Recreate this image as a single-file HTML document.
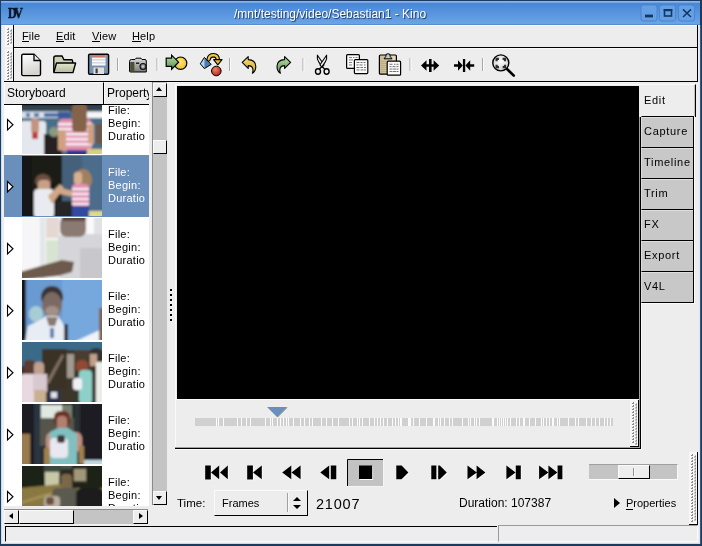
<!DOCTYPE html>
<html><head><meta charset="utf-8">
<style>
*{margin:0;padding:0;box-sizing:border-box}
html,body{width:702px;height:546px;overflow:hidden;background:#ededed;font-family:"Liberation Sans",sans-serif;font-size:12px;color:#000}
.a{position:absolute}
.t{position:absolute;white-space:nowrap;line-height:12px;font-size:12px;will-change:transform}
.hd{position:absolute;background-image:radial-gradient(circle at 1px 1px,#9a9a9a 0.9px,transparent 1.1px);background-size:3px 3px;background-color:#f6f6f6}
.th{position:absolute;width:80px;height:60px;overflow:hidden}
.tx{position:absolute;white-space:nowrap;line-height:12px;font-size:11px;letter-spacing:0.25px;left:108px;will-change:transform}
.ex{position:absolute;left:7px;width:0;height:0}
.tab{position:absolute;left:641px;width:53px;height:32px;background:#c8c8c8;border-top:1px solid #000;border-left:1px solid #dcdcdc;border-right:1px solid #000;border-bottom:1px solid #000;box-shadow:inset 0 1px 0 #dedede}
.tab span{position:absolute;left:2px;will-change:transform;white-space:nowrap;font-size:11px;line-height:12px;letter-spacing:0.7px}
</style></head><body>
<!-- window frame -->
<div class="a" style="left:0;top:0;width:702px;height:25px;background:linear-gradient(#4686d6 10%,#6aa4e6 95%)"></div><div class="a" style="left:0;top:24px;width:702px;height:1px;background:#5a8cc8"></div>
<div class="a" style="left:0;top:0;width:702px;height:1px;background:#1d3b63"></div>
<div class="a" style="left:1px;top:1px;width:699px;height:2px;background:linear-gradient(#8cbcf0,#6aa0e4)"></div>
<div class="a" style="left:0;top:25px;width:702px;height:1px;background:#f8fbff"></div>
<div class="a" style="left:0;top:0;width:1px;height:546px;background:#1e3a5c"></div>
<div class="a" style="left:1px;top:25px;width:1px;height:519px;background:#c8ddf5"></div>
<div class="a" style="left:700px;top:0;width:2px;height:546px;background:#1e3a5c"></div><div class="a" style="left:700px;top:25px;width:1px;height:519px;background:#3a5a84"></div>
<div class="a" style="left:699px;top:25px;width:1px;height:519px;background:#d6e6f7"></div>
<div class="a" style="left:0;top:544px;width:702px;height:2px;background:#1e3a5c"></div>
<div class="a" style="left:1px;top:543px;width:699px;height:1px;background:#c8ddf5"></div>

<!-- title -->
<div class="t" style="left:8px;top:6px;font-family:'Liberation Serif';font-weight:bold;font-size:15px;line-height:15px;color:#0a1020;letter-spacing:-3px;transform:scaleX(0.8);transform-origin:0 0;-webkit-text-stroke:0.5px #0a1020">DV</div>
<div class="t" style="left:234px;top:8px;color:#fff;text-shadow:1px 1px 1px #1a3358">/mnt/testing/video/Sebastian1 - Kino</div>

<svg class="a" style="left:636px;top:0" width="66" height="25">
<rect x="5" y="5" width="16" height="16" rx="2.5" fill="#63a0e6" stroke="#4a84cc" stroke-width="1"/>
<rect x="23.5" y="5" width="16" height="16" rx="2.5" fill="#63a0e6" stroke="#4a84cc" stroke-width="1"/>
<rect x="42.5" y="5" width="16" height="16" rx="2.5" fill="#63a0e6" stroke="#4a84cc" stroke-width="1"/>
<rect x="9" y="14.6" width="8" height="2.8" fill="#16365e"/>
<rect x="28.5" y="9.8" width="7" height="6.2" fill="none" stroke="#16365e" stroke-width="1.6"/>
<rect x="27.7" y="9" width="8.6" height="2.2" fill="#16365e"/>
<path d="M47,9.4 L55,17 M55,9.4 L47,17" stroke="#16365e" stroke-width="1.5"/>
</svg>
<!-- menubar -->
<svg class="a" style="left:5px;top:26px" width="8" height="21"><rect width="8" height="21" fill="#f7f7f7"/><path d="M2,4 h2 v-2 h-1 v1 h-1z" fill="#8c8c8c"/><path d="M5,5.5 h2 v-2 h-1 v1 h-1z" fill="#8c8c8c"/><path d="M2,7 h2 v-2 h-1 v1 h-1z" fill="#8c8c8c"/><path d="M5,8.5 h2 v-2 h-1 v1 h-1z" fill="#8c8c8c"/><path d="M2,10 h2 v-2 h-1 v1 h-1z" fill="#8c8c8c"/><path d="M5,11.5 h2 v-2 h-1 v1 h-1z" fill="#8c8c8c"/><path d="M2,13 h2 v-2 h-1 v1 h-1z" fill="#8c8c8c"/><path d="M5,14.5 h2 v-2 h-1 v1 h-1z" fill="#8c8c8c"/><path d="M2,16 h2 v-2 h-1 v1 h-1z" fill="#8c8c8c"/><path d="M5,17.5 h2 v-2 h-1 v1 h-1z" fill="#8c8c8c"/><path d="M2,19 h2 v-2 h-1 v1 h-1z" fill="#8c8c8c"/></svg>
<div class="a" style="left:13px;top:25px;width:1px;height:23px;background:#000"></div>
<div class="a" style="left:13px;top:47px;width:685px;height:1px;background:#000"></div>
<div class="a" style="left:697px;top:25px;width:1px;height:23px;background:#000"></div>
<div class="t" style="left:22px;top:30px;font-size:11px;letter-spacing:0.15px">File</div>
<div class="t" style="left:56px;top:30px;font-size:11px;letter-spacing:0.15px">Edit</div>
<div class="t" style="left:92px;top:30px;font-size:11px;letter-spacing:0.15px">View</div>
<div class="t" style="left:132px;top:30px;font-size:11px;letter-spacing:0.15px">Help</div>
<div class="a" style="left:22px;top:41px;width:7px;height:1px;background:#000"></div>
<div class="a" style="left:56px;top:41px;width:8px;height:1px;background:#000"></div>
<div class="a" style="left:92px;top:41px;width:8px;height:1px;background:#000"></div>
<div class="a" style="left:132px;top:41px;width:9px;height:1px;background:#000"></div>

<!-- toolbar -->
<svg class="a" style="left:5px;top:49px" width="8" height="32"><rect width="8" height="32" fill="#f7f7f7"/><path d="M2,4 h2 v-2 h-1 v1 h-1z" fill="#8c8c8c"/><path d="M5,5.5 h2 v-2 h-1 v1 h-1z" fill="#8c8c8c"/><path d="M2,7 h2 v-2 h-1 v1 h-1z" fill="#8c8c8c"/><path d="M5,8.5 h2 v-2 h-1 v1 h-1z" fill="#8c8c8c"/><path d="M2,10 h2 v-2 h-1 v1 h-1z" fill="#8c8c8c"/><path d="M5,11.5 h2 v-2 h-1 v1 h-1z" fill="#8c8c8c"/><path d="M2,13 h2 v-2 h-1 v1 h-1z" fill="#8c8c8c"/><path d="M5,14.5 h2 v-2 h-1 v1 h-1z" fill="#8c8c8c"/><path d="M2,16 h2 v-2 h-1 v1 h-1z" fill="#8c8c8c"/><path d="M5,17.5 h2 v-2 h-1 v1 h-1z" fill="#8c8c8c"/><path d="M2,19 h2 v-2 h-1 v1 h-1z" fill="#8c8c8c"/><path d="M5,20.5 h2 v-2 h-1 v1 h-1z" fill="#8c8c8c"/><path d="M2,22 h2 v-2 h-1 v1 h-1z" fill="#8c8c8c"/><path d="M5,23.5 h2 v-2 h-1 v1 h-1z" fill="#8c8c8c"/><path d="M2,25 h2 v-2 h-1 v1 h-1z" fill="#8c8c8c"/><path d="M5,26.5 h2 v-2 h-1 v1 h-1z" fill="#8c8c8c"/><path d="M2,28 h2 v-2 h-1 v1 h-1z" fill="#8c8c8c"/><path d="M5,29.5 h2 v-2 h-1 v1 h-1z" fill="#8c8c8c"/><path d="M2,31 h2 v-2 h-1 v1 h-1z" fill="#8c8c8c"/></svg>
<div class="a" style="left:13px;top:48px;width:1px;height:34px;background:#000"></div>
<div class="a" style="left:4px;top:81px;width:694px;height:1px;background:#000"></div>
<div class="a" style="left:697px;top:48px;width:1px;height:34px;background:#000"></div>
<div class="a" style="left:14px;top:48px;width:683px;height:1px;background:#fafafa"></div>
<svg class="a" style="left:0;top:48px" width="520" height="34" viewBox="0 48 520 34">
<defs>
<linearGradient id="gdoc" x1="0" y1="0" x2="0.3" y2="1"><stop offset="0" stop-color="#fff"/><stop offset="1" stop-color="#d6d4d0"/></linearGradient>
<linearGradient id="gfold" x1="0" y1="0" x2="0" y2="1"><stop offset="0" stop-color="#e4e8d0"/><stop offset="1" stop-color="#b4b89c"/></linearGradient>
<linearGradient id="ggreen" x1="0" y1="0" x2="0" y2="1"><stop offset="0" stop-color="#b8e0a8"/><stop offset="1" stop-color="#5a9050"/></linearGradient>
<linearGradient id="gyel" x1="0" y1="0" x2="0" y2="1"><stop offset="0" stop-color="#f8e080"/><stop offset="1" stop-color="#d0a020"/></linearGradient>
<radialGradient id="gred" cx="0.4" cy="0.35" r="0.7"><stop offset="0" stop-color="#f08070"/><stop offset="1" stop-color="#b02010"/></radialGradient>
<radialGradient id="gcirc" cx="0.45" cy="0.4" r="0.7"><stop offset="0" stop-color="#ffe870"/><stop offset="1" stop-color="#e8b830"/></radialGradient>
<linearGradient id="gtan" x1="0" y1="0" x2="1" y2="0"><stop offset="0" stop-color="#c8b890"/><stop offset="1" stop-color="#e8dcc0"/></linearGradient>
<radialGradient id="glens" cx="0.5" cy="0.4" r="0.7"><stop offset="0" stop-color="#fff"/><stop offset="1" stop-color="#c8c8c8"/></radialGradient>
</defs>
<!-- new -->
<path d="M21.7,55.8 Q21.7,54.3 23.2,54.3 H34 L40.5,60.8 V74.2 Q40.5,75.6 39,75.6 H23.2 Q21.7,75.6 21.7,74.2 Z" fill="url(#gdoc)" stroke="#000" stroke-width="1.4"/>
<path d="M34,54.5 V60.5 H40.3" fill="#e8e8e8" stroke="#000" stroke-width="1.3"/>
<!-- open -->
<path d="M53.8,72 V58 Q53.8,56 55.8,56 H62 L64,59.8 H71.5 Q72.6,59.8 72.6,61 V63" fill="#cdd0b4" stroke="#000" stroke-width="1.4"/>
<path d="M56.5,63 H75.6 L73,72.6 H53.8 Z" fill="url(#gfold)" stroke="#000" stroke-width="1.4" stroke-linejoin="round"/>
<!-- save -->
<rect x="88.6" y="54.3" width="20" height="20" rx="1.2" fill="#7894b4" stroke="#000" stroke-width="1.4"/>
<rect x="92" y="55" width="13.5" height="10.5" fill="#fafafa"/>
<rect x="92" y="55" width="13.5" height="2.6" fill="#d07868"/>
<rect x="92" y="59.5" width="13.5" height="0.8" fill="#b8b8c0"/>
<rect x="92" y="62.5" width="13.5" height="0.8" fill="#b8b8c0"/>
<rect x="93.5" y="67.5" width="10.5" height="6.5" fill="#e0e0dc"/>
<rect x="95.5" y="68.5" width="2.2" height="4.8" fill="#404040"/>
<!-- separators -->
<rect x="117" y="58" width="1" height="13" fill="#a8a8a8"/><rect x="118" y="58" width="1" height="13" fill="#fafafa"/>
<rect x="156.5" y="58" width="1" height="13" fill="#a8a8a8"/><rect x="157.5" y="58" width="1" height="13" fill="#fafafa"/>
<rect x="229" y="58" width="1" height="13" fill="#a8a8a8"/><rect x="230" y="58" width="1" height="13" fill="#fafafa"/>
<rect x="302.5" y="58" width="1" height="13" fill="#a8a8a8"/><rect x="303.5" y="58" width="1" height="13" fill="#fafafa"/>
<rect x="409.5" y="58" width="1" height="13" fill="#a8a8a8"/><rect x="410.5" y="58" width="1" height="13" fill="#fafafa"/>
<rect x="482" y="58" width="1" height="13" fill="#a8a8a8"/><rect x="483" y="58" width="1" height="13" fill="#fafafa"/>
<!-- camera -->
<linearGradient id="gcam" x1="0" y1="0" x2="0" y2="1"><stop offset="0" stop-color="#d8d8d8"/><stop offset="1" stop-color="#7a7a7a"/></linearGradient>
<path d="M129.5,61.5 Q129.5,59.5 131.5,59.5 H135 L136,58.2 H141 L142,59.5 H145 Q146.3,59.5 146.3,61 V72 H130.5 Q129.5,72 129.5,71 Z" fill="url(#gcam)" stroke="#000" stroke-width="1"/>
<rect x="130.2" y="62" width="4.2" height="9.6" fill="#4e4e36"/>
<rect x="136" y="62.5" width="3.2" height="1.4" fill="#101010"/>
<circle cx="143" cy="66.5" r="3" fill="#808080" stroke="#101010" stroke-width="1.1"/>
<circle cx="143" cy="66.5" r="1.2" fill="#c8c8c8"/>
<!-- capture -->
<circle cx="180.6" cy="63.2" r="6.2" fill="url(#gcirc)" stroke="#000" stroke-width="1.2"/>
<path d="M166.2,58.2 H171.6 V55.2 L178.6,62.2 L171.6,69.2 V66.4 H166.2 Z" fill="url(#ggreen)" stroke="#000" stroke-width="1.2" stroke-linejoin="miter"/>
<!-- shapes -->
<path d="M200.3,63.8 L204.4,57.4 L204.4,68.6 Z" fill="#b4d4f2"/>
<path d="M204.4,57.4 L211.2,64.4 L204.4,68.6 Z" fill="#4a7cb4"/>
<path d="M204.4,57.4 L200.3,63.8 L204.4,68.6 L211.2,64.4 Z" fill="none" stroke="#000" stroke-width="1"/>
<path d="M208.6,59.4 Q209.4,55.2 213.6,55.2 Q217.6,55.4 217.8,59.6" fill="none" stroke="#000" stroke-width="4.4" stroke-linecap="round"/>
<path d="M208.6,59.4 Q209.4,55.2 213.6,55.2 Q217.6,55.4 217.8,59.6" fill="none" stroke="#f0c840" stroke-width="2.2" stroke-linecap="round"/>
<path d="M213.6,59.6 H222 L217.8,64.8 Z" fill="#e8b830" stroke="#000" stroke-width="1.1" stroke-linejoin="round"/>
<circle cx="216.3" cy="71" r="4.8" fill="url(#gred)" stroke="#000" stroke-width="1"/>
<!-- undo -->
<path d="M242.2,62.4 L248.2,56.6 V59.6 Q255.6,59.8 255.8,66.4 Q255.8,71 252.4,73.2 Q253.4,70.6 252.8,68.6 Q252,65.6 248.2,65.6 V68.4 Z" fill="url(#gyel)" stroke="#000" stroke-width="1.1" stroke-linejoin="round"/>
<!-- redo -->
<path d="M290.6,62.4 L284.6,56.6 V59.6 Q277.2,59.8 277,66.4 Q277,71 280.4,73.2 Q279.4,70.6 280,68.6 Q280.8,65.6 284.6,65.6 V68.4 Z" fill="url(#ggreen)" stroke="#000" stroke-width="1.1" stroke-linejoin="round"/>
<!-- scissors -->
<path d="M317.4,55.2 Q316.6,59 319,62.4 L322.3,67 L324,64.8 Z" fill="#f0f0f0" stroke="#000" stroke-width="1.1" stroke-linejoin="round"/>
<path d="M326.6,55.2 Q327.4,59 325,62.4 L321.7,67 L320,64.8 Z" fill="#f0f0f0" stroke="#000" stroke-width="1.1" stroke-linejoin="round"/>
<path d="M322,66.5 L319.4,69 M322,66.5 L324.6,69" stroke="#000" stroke-width="1.3"/>
<ellipse cx="318" cy="71.5" rx="2.5" ry="2.7" fill="none" stroke="#000" stroke-width="1.4"/>
<ellipse cx="326.6" cy="71.5" rx="2.5" ry="2.7" fill="none" stroke="#000" stroke-width="1.4"/>
<!-- copy -->
<rect x="346.6" y="54.6" width="12.8" height="13.8" rx="1" fill="#fafafa" stroke="#000" stroke-width="1.2"/>
<g fill="#777"><rect x="349" y="57" width="3" height="0.9"/><rect x="353" y="57" width="1.5" height="0.9"/><rect x="355.5" y="57" width="2" height="0.9"/><rect x="349" y="59.5" width="4" height="0.9"/><rect x="349" y="62" width="3" height="0.9"/><rect x="349" y="64.5" width="3" height="0.9"/></g>
<rect x="354.4" y="59.6" width="13.4" height="14" rx="1" fill="#fafafa" stroke="#000" stroke-width="1.2"/>
<g fill="#666"><rect x="356.5" y="62" width="3" height="0.9"/><rect x="360.5" y="62" width="2" height="0.9"/><rect x="363.5" y="62" width="2" height="0.9"/><rect x="356.5" y="64.5" width="2" height="0.9"/><rect x="359.5" y="64.5" width="3" height="0.9"/><rect x="364" y="64.5" width="1.5" height="0.9"/><rect x="356.5" y="67" width="3" height="0.9"/><rect x="360.5" y="67" width="2.5" height="0.9"/><rect x="364" y="67" width="2" height="0.9"/><rect x="356.5" y="69.5" width="3" height="0.9"/><rect x="360.5" y="69.5" width="3" height="0.9"/><rect x="364" y="69.5" width="2" height="0.9"/></g>
<!-- paste -->
<rect x="379.4" y="55" width="17" height="19.2" rx="1" fill="url(#gtan)" stroke="#000" stroke-width="1.2"/>
<g fill="#b8a878"><rect x="381" y="61" width="6" height="0.8"/><rect x="381" y="63" width="6" height="0.8"/><rect x="381" y="65" width="6" height="0.8"/><rect x="381" y="67" width="6" height="0.8"/><rect x="381" y="69" width="6" height="0.8"/><rect x="381" y="71" width="6" height="0.8"/></g>
<path d="M384,58.8 L386,56.2 V54.4 Q388,53 390,54.4 V56.2 L392,58.8 Z" fill="#c8c8c8" stroke="#000" stroke-width="1"/>
<rect x="387.2" y="61.2" width="13.4" height="14" rx="1" fill="#fafafa" stroke="#000" stroke-width="1.2"/>
<g fill="#666"><rect x="389.5" y="63.8" width="3" height="0.9"/><rect x="394" y="63.8" width="1.5" height="0.9"/><rect x="396.5" y="63.8" width="2" height="0.9"/><rect x="389.5" y="66.2" width="2" height="0.9"/><rect x="392.5" y="66.2" width="3" height="0.9"/><rect x="396.5" y="66.2" width="2" height="0.9"/><rect x="389.5" y="68.6" width="3" height="0.9"/><rect x="393" y="68.6" width="3" height="0.9"/><rect x="396.5" y="68.6" width="2" height="0.9"/><rect x="389.5" y="71" width="3" height="0.9"/><rect x="393" y="71" width="3" height="0.9"/><rect x="396.5" y="71" width="2" height="0.9"/></g>
<!-- expand -->
<path d="M421,65.5 L426.5,60.2 V64.2 H429 V59 H431.6 V64.2 H433.6 V60.2 L439.2,65.5 L433.6,70.8 V66.8 H431.6 V72 H429 V66.8 H426.5 V70.8 Z" fill="#000"/>
<!-- contract -->
<path d="M454,64.2 H458 V60.2 L462.8,65.5 L458,70.8 V66.8 H454 Z" fill="#000"/>
<path d="M474.2,64.2 H470.2 V60.2 L465.4,65.5 L470.2,70.8 V66.8 H474.2 Z" fill="#000"/>
<rect x="462.9" y="59" width="2.3" height="13" fill="#000"/>
<!-- zoom -->
<line x1="506.5" y1="68.5" x2="513.8" y2="75.6" stroke="#000" stroke-width="2.6" stroke-linecap="round"/>
<circle cx="500.8" cy="62.9" r="8" fill="url(#glens)" stroke="#000" stroke-width="1.4"/>
<path d="M496.6,61.2 V58.8 H499 M502.6,58.8 H505 V61.2 M505,64.8 V67.2 H502.6 M499,67.2 H496.6 V64.8" fill="none" stroke="#303030" stroke-width="2.2"/>
</svg>


<!-- storyboard tree -->
<div class="a" style="left:4px;top:82px;width:145px;height:424px;background:#fff"></div>
<div class="a" style="left:0;top:0;width:149px;height:506px;overflow:hidden"><div class="a" style="left:4px;top:155px;width:145px;height:62px;background:#6a8fbb"></div>
<svg class="a" style="left:0;top:0" width="150" height="507" viewBox="0 0 150 507">
<defs>
<filter id="bl" x="-5%" y="-5%" width="110%" height="110%"><feGaussianBlur stdDeviation="1"/></filter>
<clipPath id="c1"><rect x="0" y="0" width="80" height="60"/></clipPath>
<path id="exp" d="M0.5,0.5 L6,5.75 L0.5,11 Z" fill="#fff" stroke="#000" stroke-width="1.1" stroke-linejoin="miter"/>
</defs>
<!-- thumb 1 -->
<g transform="translate(22,94)" clip-path="url(#c1)"><g filter="url(#bl)">
<rect x="-2" y="-2" width="84" height="64" fill="#4a6e88"/>
<rect x="-2" y="-2" width="84" height="13.5" fill="#141820"/>
<rect x="-2" y="11.5" width="84" height="6" fill="#33434f"/>
<rect x="-2" y="17.5" width="50" height="6.5" fill="#d8e2ee"/>
<rect x="4" y="19" width="4" height="4" fill="#5872a0"/><rect x="12" y="19" width="5" height="4" fill="#5872a0"/><rect x="22" y="19" width="14" height="4" fill="#4a68a8"/><rect x="36" y="18" width="12" height="6" fill="#3a5898"/>
<rect x="58" y="17.5" width="24" height="6.5" fill="#f4f6f8"/>
<rect x="-2" y="27" width="26" height="35" rx="3" fill="#e4e8ee"/>
<rect x="9" y="24" width="8" height="15" rx="3" fill="#c49480"/>
<rect x="10" y="38" width="6" height="7" fill="#c04040"/>
<rect x="22" y="40" width="18" height="22" fill="#282420"/>
<ellipse cx="32" cy="38" rx="5" ry="5" fill="#8a9a80"/>
<rect x="36" y="25" width="34" height="32" rx="5" fill="#e28eb0"/>
<rect x="36" y="29" width="34" height="2.4" fill="#f8f2f4"/>
<rect x="36" y="34" width="34" height="2.4" fill="#f8f2f4"/>
<rect x="36" y="39" width="34" height="2.4" fill="#f8f2f4"/>
<rect x="36" y="44" width="34" height="2.4" fill="#f8f2f4"/>
<rect x="36" y="49" width="34" height="2.4" fill="#f8f2f4"/>
<rect x="50" y="10" width="15" height="28" rx="4" fill="#846448"/>
<rect x="36" y="36" width="8" height="20" fill="#d0a080"/>
<rect x="66" y="30" width="6" height="20" fill="#d0a080"/>
<rect x="45" y="56" width="20" height="6" fill="#303890"/>
<rect x="74" y="30" width="8" height="20" fill="#6a5848"/>
<rect x="65" y="55" width="17" height="7" fill="#d8d080"/>
</g></g>
<!-- thumb 2 -->
<g transform="translate(22,156)" clip-path="url(#c1)"><g filter="url(#bl)">
<rect x="-2" y="-2" width="84" height="64" fill="#121518"/>
<rect x="10" y="-2" width="30" height="64" fill="#1e1a18"/>
<rect x="40" y="-2" width="42" height="64" fill="#44607a"/>
<rect x="60" y="-2" width="22" height="64" fill="#4c6c8a"/>
<ellipse cx="21" cy="25" rx="8" ry="7" fill="#6a5040"/>
<rect x="16" y="24" width="12" height="12" rx="4" fill="#c8a088"/>
<rect x="12" y="33" width="20" height="29" rx="4" fill="#e8ecf0"/>
<path d="M26,40 L38,28 L42,32 L30,48 Z" fill="#d0a888"/>
<rect x="34" y="45" width="26" height="17" fill="#262626"/>
<ellipse cx="61" cy="24" rx="9" ry="11" fill="#a08060"/>
<rect x="52" y="16" width="8" height="12" rx="3" fill="#d8b090"/>
<path d="M38,32 L56,36 L56,42 L38,38 Z" fill="#d0a888"/>
<rect x="50" y="28" width="17" height="23" rx="4" fill="#e290b4"/>
<rect x="50" y="32" width="17" height="2" fill="#f6f0f2"/>
<rect x="50" y="37" width="17" height="2" fill="#f6f0f2"/>
<rect x="50" y="42" width="17" height="2" fill="#f6f0f2"/>
<rect x="50" y="47" width="17" height="2" fill="#f6f0f2"/>
<rect x="50" y="50" width="17" height="12" fill="#3048a0"/>
<rect x="67" y="55" width="15" height="7" fill="#e0d890"/>
</g></g>
<!-- thumb 3 -->
<g transform="translate(22,218)" clip-path="url(#c1)"><g filter="url(#bl)">
<rect x="-2" y="-2" width="84" height="64" fill="#f6f6f8"/>
<rect x="18" y="-2" width="5" height="64" fill="#e2e6ea"/>
<rect x="24" y="-2" width="13" height="22" fill="#e4d8d2"/>
<rect x="24" y="22" width="13" height="28" fill="#d8e4d2"/>
<rect x="66" y="-2" width="6" height="30" fill="#fafafc"/>
<rect x="72" y="-2" width="10" height="30" fill="#e0e2e4"/>
<rect x="36" y="16" width="46" height="46" rx="6" fill="#d6d6da"/>
<rect x="58" y="30" width="24" height="32" fill="#c8c8cc"/>
<rect x="38" y="-2" width="26" height="21" rx="7" fill="#8a7a72"/>
<rect x="40" y="-2" width="24" height="5" fill="#5a4c44"/>
<path d="M-2,54 L22,47 L40,42 L52,44 L50,54 L36,58 L-2,62 Z" fill="#6e5a4e"/>
</g></g>
<!-- thumb 4 -->
<g transform="translate(22,280)" clip-path="url(#c1)"><g filter="url(#bl)">
<rect x="-2" y="-2" width="84" height="64" fill="#6a9ad2"/>
<rect x="40" y="-2" width="42" height="64" fill="#76a8de"/>
<rect x="-2" y="-2" width="6" height="64" fill="#181818"/>
<ellipse cx="30" cy="17" rx="11" ry="11" fill="#3a3232"/>
<ellipse cx="30" cy="25" rx="10" ry="13" fill="#7c6a62"/>
<ellipse cx="30" cy="31" rx="7" ry="5" fill="#a09088"/>
<ellipse cx="14" cy="34" rx="7" ry="8" fill="#a8ccd4"/>
<path d="M3,62 L6,46 L18,40 L24,36 L36,36 L40,42 L44,50 L44,62 Z" fill="#e8ecf4"/>
<path d="M24,37 L36,37 L33,46 L27,46 Z" fill="#8a7a72"/>
<rect x="42" y="44" width="4" height="18" fill="#303440"/>
<rect x="28" y="48" width="4" height="10" fill="#6080b0"/>
<path d="M52,62 L80,49 L82,62 Z" fill="#f0f4f8"/>
<rect x="77" y="28" width="5" height="34" fill="#806050"/>
</g></g>
<!-- thumb 5 -->
<g transform="translate(22,342)" clip-path="url(#c1)"><g filter="url(#bl)">
<rect x="-2" y="-2" width="84" height="64" fill="#3a342c"/>
<rect x="-2" y="-2" width="84" height="10" fill="#3a6a88"/>
<rect x="-2" y="-2" width="22" height="26" fill="#3a6a88"/>
<rect x="52" y="8" width="18" height="22" fill="#4a3c30"/>
<rect x="20" y="7" width="25" height="40" fill="#3a3028"/>
<path d="M24,40 L40,12 L42,14 L27,42 Z" fill="#807060"/>
<rect x="45" y="12" width="7" height="24" fill="#a09a90"/>
<rect x="2" y="18" width="11" height="22" rx="4" fill="#5a3a30"/>
<rect x="-2" y="32" width="20" height="30" rx="4" fill="#e8d8e0"/>
<rect x="12" y="20" width="10" height="14" rx="4" fill="#c0a090"/>
<rect x="11" y="32" width="14" height="18" fill="#d8c8d0"/>
<rect x="12" y="48" width="12" height="14" fill="#c8b090"/>
<rect x="26" y="48" width="12" height="14" fill="#2a3050"/>
<rect x="29" y="50" width="6" height="6" fill="#e0e0e8"/>
<rect x="54" y="18" width="12" height="12" rx="5" fill="#904830"/>
<rect x="57" y="28" width="13" height="34" rx="4" fill="#8ed0c8"/>
<rect x="51" y="36" width="9" height="12" rx="3" fill="#f0f0f4"/>
<rect x="68" y="6" width="12" height="12" rx="5" fill="#303030"/>
<rect x="68" y="12" width="7" height="12" fill="#c0a088"/>
<rect x="74" y="20" width="8" height="42" fill="#ecece8"/>
</g></g>
<!-- thumb 6 -->
<g transform="translate(22,404)" clip-path="url(#c1)"><g filter="url(#bl)">
<rect x="-2" y="-2" width="84" height="64" fill="#1a1e22"/>
<rect x="12" y="-2" width="8" height="64" fill="#2a3440"/>
<rect x="18" y="14" width="34" height="28" fill="#54544c"/>
<rect x="19" y="1" width="21" height="13" fill="#e0e8e0"/>
<rect x="40" y="1" width="10" height="13" fill="#788070"/>
<rect x="52" y="-2" width="6" height="64" fill="#2c3036"/>
<rect x="32" y="7" width="16" height="16" rx="6" fill="#6a3020"/>
<rect x="35" y="12" width="10" height="14" rx="4" fill="#b08070"/>
<rect x="24" y="28" width="36" height="20" rx="6" fill="#c09080"/>
<path d="M28,62 L28,28 L36,24 L46,24 L55,30 L55,62 Z" fill="#80c0c0"/>
<rect x="28" y="34" width="18" height="20" rx="4" fill="#e8e8f0"/>
<rect x="35" y="31" width="8" height="8" rx="3" fill="#403838"/>
<rect x="-2" y="30" width="10" height="32" fill="#9a7a50"/>
<rect x="22" y="44" width="6" height="18" fill="#a08050"/>
<rect x="57" y="42" width="5" height="18" fill="#a08050"/>
<rect x="62" y="56" width="20" height="6" fill="#c0d8e0"/>
</g></g>
<!-- thumb 7 -->
<g transform="translate(22,466)" clip-path="url(#c1)"><g filter="url(#bl)">
<rect x="-2" y="-2" width="84" height="64" fill="#1e2018"/>
<rect x="22" y="-2" width="18" height="14" fill="#3a4a40"/>
<rect x="40" y="-2" width="12" height="12" fill="#405848"/>
<rect x="50" y="-2" width="16" height="20" fill="#2a2820"/>
<rect x="52" y="3" width="12" height="12" fill="#a09878"/>
<rect x="23" y="6" width="14" height="14" fill="#c8c8a8"/>
<path d="M-2,62 L-2,22 L40,18 L52,22 L82,22 L82,62 Z" fill="#8a7842"/><path d="M-2,36 L30,26 L32,28 L-2,38 Z" fill="#a89458"/>
<rect x="38" y="3" width="14" height="9" rx="4" fill="#302820"/>
<rect x="39" y="8" width="11" height="16" rx="4" fill="#7a6848"/>
<rect x="30" y="22" width="27" height="40" rx="5" fill="#5a5a50"/>
<rect x="54" y="22" width="28" height="40" rx="6" fill="#1a1a1a"/>
<rect x="22" y="30" width="16" height="12" rx="4" fill="#b8b0a0"/>
<rect x="24" y="31" width="8" height="8" rx="3" fill="#6a5040"/>
</g></g>
<!-- expanders -->
<use href="#exp" x="7" y="119"/>
<use href="#exp" x="7" y="181"/>
<use href="#exp" x="7" y="243"/>
<use href="#exp" x="7" y="305"/>
<use href="#exp" x="7" y="367"/>
<use href="#exp" x="7" y="429"/>
<use href="#exp" x="7" y="491"/>
</svg>
<div class="tx" style="top:104px">File:</div><div class="tx" style="top:117px">Begin:</div><div class="tx" style="top:130px">Duratio</div>
<div class="tx" style="top:166px;color:#fff">File:</div><div class="tx" style="top:179px;color:#fff">Begin:</div><div class="tx" style="top:192px;color:#fff">Duratio</div>
<div class="tx" style="top:228px">File:</div><div class="tx" style="top:241px">Begin:</div><div class="tx" style="top:254px">Duratio</div>
<div class="tx" style="top:290px">File:</div><div class="tx" style="top:303px">Begin:</div><div class="tx" style="top:316px">Duratio</div>
<div class="tx" style="top:352px">File:</div><div class="tx" style="top:365px">Begin:</div><div class="tx" style="top:378px">Duratio</div>
<div class="tx" style="top:414px">File:</div><div class="tx" style="top:427px">Begin:</div><div class="tx" style="top:440px">Duratio</div>
<div class="tx" style="top:476px">File:</div><div class="tx" style="top:489px">Begin:</div><div class="tx" style="top:502px">Duratio</div>
</div>
<div class="a" style="left:4px;top:82px;width:145px;height:23px;background:#ededed"></div>
<div class="a" style="left:4px;top:82px;width:100px;height:22px;border-left:1px solid #fafafa;border-top:1px solid #fafafa;border-right:1px solid #000"></div>
<div class="a" style="left:104px;top:82px;width:45px;height:22px;border-left:1px solid #fafafa;border-top:1px solid #fafafa"></div>
<div class="a" style="left:4px;top:104px;width:145px;height:1px;background:#000"></div>
<div class="t" style="left:7px;top:87px">Storyboard</div>
<div class="a" style="left:104px;top:82px;width:45px;height:22px;overflow:hidden"><div class="t" style="left:3px;top:5px">Property</div></div>

<!-- vertical scrollbar -->
<div class="a" style="left:152px;top:82px;width:15px;height:423px;background:#c4c4c4;border-left:1px solid #8a8a8a"></div>
<div class="a" style="left:153px;top:83px;width:14px;height:14px;background:#ededed;border-top:1px solid #fafafa;border-left:1px solid #fafafa;border-right:1px solid #000;border-bottom:1px solid #000"></div>
<div class="a" style="left:156px;top:87px;width:0;height:0;border-left:3.5px solid transparent;border-right:3.5px solid transparent;border-bottom:4.5px solid #000"></div>
<div class="a" style="left:153px;top:140px;width:14px;height:14px;background:#ededed;border-top:1px solid #fafafa;border-left:1px solid #fafafa;border-right:1px solid #000;border-bottom:1px solid #000"></div>
<div class="a" style="left:153px;top:491px;width:14px;height:14px;background:#ededed;border-top:1px solid #fafafa;border-left:1px solid #fafafa;border-right:1px solid #000;border-bottom:1px solid #000"></div>
<div class="a" style="left:156px;top:496px;width:0;height:0;border-left:3.5px solid transparent;border-right:3.5px solid transparent;border-top:4.5px solid #000"></div>
<svg class="a" style="left:169px;top:288px" width="5" height="35"><g fill="#fff"><rect x="1.6" y="1.6" width="2" height="2"/><rect x="1.6" y="6.6" width="2" height="2"/><rect x="1.6" y="11.6" width="2" height="2"/><rect x="1.6" y="16.6" width="2" height="2"/><rect x="1.6" y="21.6" width="2" height="2"/><rect x="1.6" y="26.6" width="2" height="2"/><rect x="1.6" y="31.6" width="2" height="2"/></g><g fill="#000"><rect x="1" y="1" width="2" height="2"/><rect x="1" y="6" width="2" height="2"/><rect x="1" y="11" width="2" height="2"/><rect x="1" y="16" width="2" height="2"/><rect x="1" y="21" width="2" height="2"/><rect x="1" y="26" width="2" height="2"/><rect x="1" y="31" width="2" height="2"/></g></svg>

<!-- horizontal scrollbar -->
<div class="a" style="left:4px;top:509px;width:144px;height:15px;background:#c4c4c4;border-top:1px solid #8a8a8a"></div>
<div class="a" style="left:4px;top:510px;width:15px;height:14px;background:#ededed;border-top:1px solid #fafafa;border-left:1px solid #fafafa;border-right:1px solid #000;border-bottom:1px solid #000"></div>
<div class="a" style="left:9px;top:513px;width:0;height:0;border-top:3.5px solid transparent;border-bottom:3.5px solid transparent;border-right:4.5px solid #000"></div>
<div class="a" style="left:19px;top:510px;width:55px;height:14px;background:#ededed;border-top:1px solid #fafafa;border-left:1px solid #fafafa;border-right:1px solid #000;border-bottom:1px solid #000"></div>
<div class="a" style="left:133px;top:510px;width:15px;height:14px;background:#ededed;border-top:1px solid #fafafa;border-left:1px solid #fafafa;border-right:1px solid #000;border-bottom:1px solid #000"></div>
<div class="a" style="left:138.5px;top:513px;width:0;height:0;border-top:3.5px solid transparent;border-bottom:3.5px solid transparent;border-left:4.5px solid #000"></div>

<!-- status bar -->
<div class="a" style="left:5px;top:526px;width:492px;height:16px;border-top:1px solid #000;border-left:1px solid #000;border-bottom:1px solid #fafafa"></div>
<div class="a" style="left:498px;top:525px;width:200px;height:17px;border-top:1px solid #9a9a9a;border-left:1px solid #9a9a9a;border-right:1px solid #fafafa;border-bottom:1px solid #fafafa"></div>

<!-- notebook -->
<div class="a" style="left:167px;top:82px;width:472px;height:1px;background:#fafafa"></div>
<div class="a" style="left:175px;top:84px;width:465px;height:1px;background:#fafafa"></div>
<div class="a" style="left:175px;top:84px;width:1px;height:364px;background:#fafafa"></div>
<div class="a" style="left:177px;top:86px;width:462px;height:313px;background:#000"></div>
<div class="a" style="left:176px;top:399px;width:462px;height:1px;background:#fafafa"></div>
<div class="a" style="left:175px;top:447px;width:465px;height:1px;background:#a0a0a0"></div>
<div class="a" style="left:175px;top:448px;width:466px;height:1px;background:#000"></div>
<div class="a" style="left:175px;top:449px;width:467px;height:1px;background:#fafafa"></div>
<div class="a" style="left:639px;top:117px;width:1px;height:331px;background:#a0a0a0"></div>
<div class="a" style="left:640px;top:117px;width:1px;height:332px;background:#000"></div>
<div class="a" style="left:641px;top:117px;width:1px;height:333px;background:#fafafa"></div>
<div class="a" style="left:638px;top:400px;width:1px;height:47px;background:#000"></div>
<div class="a" style="left:630px;top:446px;width:9px;height:1px;background:#000"></div>
<svg class="a" style="left:630px;top:400px" width="8" height="46"><rect width="8" height="46" fill="#f7f7f7"/><path d="M2,4 h2 v-2 h-1 v1 h-1z" fill="#8c8c8c"/><path d="M5,5.5 h2 v-2 h-1 v1 h-1z" fill="#8c8c8c"/><path d="M2,7 h2 v-2 h-1 v1 h-1z" fill="#8c8c8c"/><path d="M5,8.5 h2 v-2 h-1 v1 h-1z" fill="#8c8c8c"/><path d="M2,10 h2 v-2 h-1 v1 h-1z" fill="#8c8c8c"/><path d="M5,11.5 h2 v-2 h-1 v1 h-1z" fill="#8c8c8c"/><path d="M2,13 h2 v-2 h-1 v1 h-1z" fill="#8c8c8c"/><path d="M5,14.5 h2 v-2 h-1 v1 h-1z" fill="#8c8c8c"/><path d="M2,16 h2 v-2 h-1 v1 h-1z" fill="#8c8c8c"/><path d="M5,17.5 h2 v-2 h-1 v1 h-1z" fill="#8c8c8c"/><path d="M2,19 h2 v-2 h-1 v1 h-1z" fill="#8c8c8c"/><path d="M5,20.5 h2 v-2 h-1 v1 h-1z" fill="#8c8c8c"/><path d="M2,22 h2 v-2 h-1 v1 h-1z" fill="#8c8c8c"/><path d="M5,23.5 h2 v-2 h-1 v1 h-1z" fill="#8c8c8c"/><path d="M2,25 h2 v-2 h-1 v1 h-1z" fill="#8c8c8c"/><path d="M5,26.5 h2 v-2 h-1 v1 h-1z" fill="#8c8c8c"/><path d="M2,28 h2 v-2 h-1 v1 h-1z" fill="#8c8c8c"/><path d="M5,29.5 h2 v-2 h-1 v1 h-1z" fill="#8c8c8c"/><path d="M2,31 h2 v-2 h-1 v1 h-1z" fill="#8c8c8c"/><path d="M5,32.5 h2 v-2 h-1 v1 h-1z" fill="#8c8c8c"/><path d="M2,34 h2 v-2 h-1 v1 h-1z" fill="#8c8c8c"/><path d="M5,35.5 h2 v-2 h-1 v1 h-1z" fill="#8c8c8c"/><path d="M2,37 h2 v-2 h-1 v1 h-1z" fill="#8c8c8c"/><path d="M5,38.5 h2 v-2 h-1 v1 h-1z" fill="#8c8c8c"/><path d="M2,40 h2 v-2 h-1 v1 h-1z" fill="#8c8c8c"/><path d="M5,41.5 h2 v-2 h-1 v1 h-1z" fill="#8c8c8c"/><path d="M2,43 h2 v-2 h-1 v1 h-1z" fill="#8c8c8c"/><path d="M5,44.5 h2 v-2 h-1 v1 h-1z" fill="#8c8c8c"/></svg>

<svg class="a" style="left:0;top:400px" width="702" height="48" viewBox="0 400 702 48">
<rect x="195" y="418" width="418" height="8" fill="#d0d0d0"/>
<rect x="216" y="418" width="1" height="8" fill="#fcfcfc"/>
<rect x="218" y="418" width="1" height="8" fill="#fcfcfc"/>
<rect x="223" y="418" width="1" height="8" fill="#fcfcfc"/>
<rect x="237" y="418" width="1" height="8" fill="#fcfcfc"/>
<rect x="241" y="418" width="1" height="8" fill="#fcfcfc"/>
<rect x="246" y="418" width="1" height="8" fill="#fcfcfc"/>
<rect x="250" y="418" width="1" height="8" fill="#fcfcfc"/>
<rect x="265" y="418" width="1" height="8" fill="#fcfcfc"/>
<rect x="270" y="418" width="1" height="8" fill="#fcfcfc"/>
<rect x="272" y="418" width="1" height="8" fill="#fcfcfc"/>
<rect x="277" y="418" width="1" height="8" fill="#fcfcfc"/>
<rect x="280" y="418" width="1" height="8" fill="#fcfcfc"/>
<rect x="283" y="418" width="1" height="8" fill="#fcfcfc"/>
<rect x="286" y="418" width="1" height="8" fill="#fcfcfc"/>
<rect x="288" y="418" width="1" height="8" fill="#fcfcfc"/>
<rect x="293" y="418" width="1" height="8" fill="#fcfcfc"/>
<rect x="300" y="418" width="1" height="8" fill="#fcfcfc"/>
<rect x="304" y="418" width="1" height="8" fill="#fcfcfc"/>
<rect x="309" y="418" width="1" height="8" fill="#fcfcfc"/>
<rect x="312" y="418" width="1" height="8" fill="#fcfcfc"/>
<rect x="321" y="418" width="1" height="8" fill="#fcfcfc"/>
<rect x="326" y="418" width="1" height="8" fill="#fcfcfc"/>
<rect x="332" y="418" width="1" height="8" fill="#fcfcfc"/>
<rect x="338" y="418" width="1" height="8" fill="#fcfcfc"/>
<rect x="349" y="418" width="1" height="8" fill="#fcfcfc"/>
<rect x="352" y="418" width="1" height="8" fill="#fcfcfc"/>
<rect x="357" y="418" width="1" height="8" fill="#fcfcfc"/>
<rect x="359" y="418" width="1" height="8" fill="#fcfcfc"/>
<rect x="362" y="418" width="1" height="8" fill="#fcfcfc"/>
<rect x="369" y="418" width="1" height="8" fill="#fcfcfc"/>
<rect x="374" y="418" width="1" height="8" fill="#fcfcfc"/>
<rect x="377" y="418" width="1" height="8" fill="#fcfcfc"/>
<rect x="380" y="418" width="1" height="8" fill="#fcfcfc"/>
<rect x="383" y="418" width="1" height="8" fill="#fcfcfc"/>
<rect x="387" y="418" width="1" height="8" fill="#fcfcfc"/>
<rect x="392" y="418" width="1" height="8" fill="#fcfcfc"/>
<rect x="395" y="418" width="1" height="8" fill="#fcfcfc"/>
<rect x="398" y="418" width="1" height="8" fill="#fcfcfc"/>
<rect x="413" y="418" width="1" height="8" fill="#fcfcfc"/>
<rect x="419" y="418" width="1" height="8" fill="#fcfcfc"/>
<rect x="426" y="418" width="1" height="8" fill="#fcfcfc"/>
<rect x="438" y="418" width="1" height="8" fill="#fcfcfc"/>
<rect x="440" y="418" width="1" height="8" fill="#fcfcfc"/>
<rect x="444" y="418" width="1" height="8" fill="#fcfcfc"/>
<rect x="449" y="418" width="1" height="8" fill="#fcfcfc"/>
<rect x="452" y="418" width="1" height="8" fill="#fcfcfc"/>
<rect x="462" y="418" width="1" height="8" fill="#fcfcfc"/>
<rect x="468" y="418" width="1" height="8" fill="#fcfcfc"/>
<rect x="470" y="418" width="1" height="8" fill="#fcfcfc"/>
<rect x="474" y="418" width="1" height="8" fill="#fcfcfc"/>
<rect x="476" y="418" width="1" height="8" fill="#fcfcfc"/>
<rect x="479" y="418" width="1" height="8" fill="#fcfcfc"/>
<rect x="497" y="418" width="1" height="8" fill="#fcfcfc"/>
<rect x="499" y="418" width="1" height="8" fill="#fcfcfc"/>
<rect x="501" y="418" width="1" height="8" fill="#fcfcfc"/>
<rect x="503" y="418" width="1" height="8" fill="#fcfcfc"/>
<rect x="505" y="418" width="1" height="8" fill="#fcfcfc"/>
<rect x="507" y="418" width="1" height="8" fill="#fcfcfc"/>
<rect x="510" y="418" width="1" height="8" fill="#fcfcfc"/>
<rect x="516" y="418" width="1" height="8" fill="#fcfcfc"/>
<rect x="519" y="418" width="1" height="8" fill="#fcfcfc"/>
<rect x="523" y="418" width="1" height="8" fill="#fcfcfc"/>
<rect x="524" y="418" width="1" height="8" fill="#fcfcfc"/>
<rect x="529" y="418" width="1" height="8" fill="#fcfcfc"/>
<rect x="535" y="418" width="1" height="8" fill="#fcfcfc"/>
<rect x="541" y="418" width="1" height="8" fill="#fcfcfc"/>
<rect x="543" y="418" width="1" height="8" fill="#fcfcfc"/>
<rect x="546" y="418" width="1" height="8" fill="#fcfcfc"/>
<rect x="549" y="418" width="1" height="8" fill="#fcfcfc"/>
<rect x="552" y="418" width="1" height="8" fill="#fcfcfc"/>
<rect x="553" y="418" width="1" height="8" fill="#fcfcfc"/>
<rect x="557" y="418" width="1" height="8" fill="#fcfcfc"/>
<rect x="559" y="418" width="1" height="8" fill="#fcfcfc"/>
<rect x="568" y="418" width="1" height="8" fill="#fcfcfc"/>
<rect x="575" y="418" width="1" height="8" fill="#fcfcfc"/>
<rect x="578" y="418" width="1" height="8" fill="#fcfcfc"/>
<rect x="586" y="418" width="1" height="8" fill="#fcfcfc"/>
<rect x="591" y="418" width="1" height="8" fill="#fcfcfc"/>
<rect x="595" y="418" width="1" height="8" fill="#fcfcfc"/>
<rect x="599" y="418" width="1" height="8" fill="#fcfcfc"/>
<rect x="604" y="418" width="1" height="8" fill="#fcfcfc"/>
<rect x="607" y="418" width="1" height="8" fill="#fcfcfc"/>
<rect x="610" y="418" width="1" height="8" fill="#fcfcfc"/>
<rect x="400" y="418" width="2" height="8" fill="#fcfcfc"/>
<rect x="408" y="418" width="3" height="8" fill="#fcfcfc"/>
<rect x="433" y="418" width="2" height="8" fill="#fcfcfc"/>
<rect x="492" y="418" width="2" height="8" fill="#fcfcfc"/>
<path d="M267,407 H287 L277,417 Z" fill="#6a8fbb"/>
<path d="M287,407.5 L277.5,417" stroke="#506070" stroke-width="0.8"/>
</svg>
<svg class="a" style="left:0;top:455px" width="702" height="35" viewBox="0 455 702 35">
<rect x="347" y="459" width="36" height="27" fill="#c2c2c2"/>
<path d="M347.5,486 V459.5 H383" fill="none" stroke="#000" stroke-width="1"/>
<path d="M383.5,459 V486.5 H347" fill="none" stroke="#f4f4f4" stroke-width="1"/>
<path d="M205.2,465.4 L210.8,465.4 L210.8,479.4 L205.2,479.4 Z M211.0,472.4 L219.2,465.6 L219.2,479.2 Z M220.0,472.4 L227.8,465.6 L227.8,479.2 Z M247.2,465.4 L252.9,465.4 L252.9,479.4 L247.2,479.4 Z M253.0,472.4 L261.8,465.6 L261.8,479.2 Z M282.2,472.4 L291.3,465.6 L291.3,479.2 Z M291.5,472.4 L300.6,465.6 L300.6,479.2 Z M320.3,472.4 L329.2,465.6 L329.2,479.2 Z M330.8,465.6 L336.3,465.6 L336.3,479.2 L330.8,479.2 Z M359.0,465.4 L372.2,465.4 L372.2,479.0 L359.0,479.0 Z M396.3,465.6 L401.6,465.6 L408.4,472.4 L401.6,479.2 L396.3,479.2 Z M431.3,465.6 L436.4,465.6 L436.4,479.2 L431.3,479.2 Z M438.2,465.6 L439.8,465.6 L446.8,472.4 L439.8,479.2 L438.2,479.2 Z M467.5,465.6 L476.8,472.4 L467.5,479.2 Z M476.6,465.6 L485.4,472.4 L476.6,479.2 Z M506.4,465.6 L515.6,472.4 L506.4,479.2 Z M515.8,465.6 L520.8,465.6 L520.8,479.2 L515.8,479.2 Z M539.1,465.6 L548.4,472.4 L539.1,479.2 Z M548.4,465.6 L557.4,472.4 L548.4,479.2 Z M557.6,465.6 L562.4,465.6 L562.4,479.2 L557.6,479.2 Z" fill="#fafafa" transform="translate(0.9,0.9)"/>
<path d="M205.2,465.4 L210.8,465.4 L210.8,479.4 L205.2,479.4 Z M211.0,472.4 L219.2,465.6 L219.2,479.2 Z M220.0,472.4 L227.8,465.6 L227.8,479.2 Z M247.2,465.4 L252.9,465.4 L252.9,479.4 L247.2,479.4 Z M253.0,472.4 L261.8,465.6 L261.8,479.2 Z M282.2,472.4 L291.3,465.6 L291.3,479.2 Z M291.5,472.4 L300.6,465.6 L300.6,479.2 Z M320.3,472.4 L329.2,465.6 L329.2,479.2 Z M330.8,465.6 L336.3,465.6 L336.3,479.2 L330.8,479.2 Z M359.0,465.4 L372.2,465.4 L372.2,479.0 L359.0,479.0 Z M396.3,465.6 L401.6,465.6 L408.4,472.4 L401.6,479.2 L396.3,479.2 Z M431.3,465.6 L436.4,465.6 L436.4,479.2 L431.3,479.2 Z M438.2,465.6 L439.8,465.6 L446.8,472.4 L439.8,479.2 L438.2,479.2 Z M467.5,465.6 L476.8,472.4 L467.5,479.2 Z M476.6,465.6 L485.4,472.4 L476.6,479.2 Z M506.4,465.6 L515.6,472.4 L506.4,479.2 Z M515.8,465.6 L520.8,465.6 L520.8,479.2 L515.8,479.2 Z M539.1,465.6 L548.4,472.4 L539.1,479.2 Z M548.4,465.6 L557.4,472.4 L548.4,479.2 Z M557.6,465.6 L562.4,465.6 L562.4,479.2 L557.6,479.2 Z" fill="#000"/>
</svg>
<div class="a" style="left:589px;top:464px;width:89px;height:16px;background:#c4c4c4;border-top:1px solid #a0a0a0;border-right:1px solid #fafafa;border-bottom:1px solid #fafafa"></div>
<div class="a" style="left:618px;top:465px;width:32px;height:14px;background:#ededed;border-top:1px solid #fafafa;border-left:1px solid #fafafa;border-right:1px solid #000;border-bottom:1px solid #000"></div>
<div class="a" style="left:633px;top:468px;width:1px;height:8px;background:#909090"></div>
<div class="a" style="left:634px;top:468px;width:1px;height:8px;background:#fafafa"></div>


<!-- tabs -->
<div class="a" style="left:639px;top:84px;width:57px;height:33px;background:#ededed;border-top:1px solid #fafafa;border-right:1px solid #000"></div>
<div class="t" style="left:644px;top:94px;font-size:11px;letter-spacing:0.7px">Edit</div>
<div class="a" style="left:694px;top:85px;width:1px;height:31px;background:#c0c0c0"></div>
<div class="a" style="left:694px;top:117px;width:1px;height:187px;background:#fafafa"></div>
<div class="a" style="left:641px;top:303px;width:54px;height:1px;background:#fafafa"></div>
<div class="tab" style="top:116px"><span style="top:8px">Capture</span></div>
<div class="tab" style="top:147px"><span style="top:8px">Timeline</span></div>
<div class="tab" style="top:178px"><span style="top:8px">Trim</span></div>
<div class="tab" style="top:209px"><span style="top:8px">FX</span></div>
<div class="tab" style="top:240px"><span style="top:8px">Export</span></div>
<div class="tab" style="top:271px"><span style="top:8px">V4L</span></div>

<!-- bottom info -->
<div class="t" style="left:177px;top:497px;font-size:11.5px">Time:</div>
<div class="a" style="left:214px;top:490px;width:94px;height:26px;background:#ededed;border-top:1px solid #fafafa;border-left:1px solid #fafafa;border-right:1px solid #000;border-bottom:1px solid #000"></div>
<div class="t" style="left:222px;top:497px;font-size:11px">Frames</div>
<div class="a" style="left:287px;top:493px;width:1px;height:19px;background:#a0a0a0"></div>
<div class="a" style="left:288px;top:493px;width:1px;height:19px;background:#fafafa"></div>
<div class="a" style="left:293px;top:497px;width:0;height:0;border-left:4px solid transparent;border-right:4px solid transparent;border-bottom:4px solid #000"></div>
<div class="a" style="left:293px;top:505px;width:0;height:0;border-left:4px solid transparent;border-right:4px solid transparent;border-top:4px solid #000"></div>
<div class="t" style="left:316px;top:497px;font-size:14.5px;line-height:14px;letter-spacing:0.8px">21007</div>
<div class="t" style="left:459px;top:497px">Duration: 107387</div>
<div class="a" style="left:614px;top:497.5px;width:0;height:0;border-top:5.5px solid transparent;border-bottom:5.5px solid transparent;border-left:6.5px solid #000"></div>
<div class="t" style="left:626px;top:497px;font-size:11px">Properties</div>
<div class="a" style="left:626px;top:509px;width:7px;height:1px;background:#000"></div>
<svg class="a" style="left:689px;top:452px" width="8" height="72"><rect width="8" height="72" fill="#f7f7f7"/><path d="M2,4 h2 v-2 h-1 v1 h-1z" fill="#8c8c8c"/><path d="M5,5.5 h2 v-2 h-1 v1 h-1z" fill="#8c8c8c"/><path d="M2,7 h2 v-2 h-1 v1 h-1z" fill="#8c8c8c"/><path d="M5,8.5 h2 v-2 h-1 v1 h-1z" fill="#8c8c8c"/><path d="M2,10 h2 v-2 h-1 v1 h-1z" fill="#8c8c8c"/><path d="M5,11.5 h2 v-2 h-1 v1 h-1z" fill="#8c8c8c"/><path d="M2,13 h2 v-2 h-1 v1 h-1z" fill="#8c8c8c"/><path d="M5,14.5 h2 v-2 h-1 v1 h-1z" fill="#8c8c8c"/><path d="M2,16 h2 v-2 h-1 v1 h-1z" fill="#8c8c8c"/><path d="M5,17.5 h2 v-2 h-1 v1 h-1z" fill="#8c8c8c"/><path d="M2,19 h2 v-2 h-1 v1 h-1z" fill="#8c8c8c"/><path d="M5,20.5 h2 v-2 h-1 v1 h-1z" fill="#8c8c8c"/><path d="M2,22 h2 v-2 h-1 v1 h-1z" fill="#8c8c8c"/><path d="M5,23.5 h2 v-2 h-1 v1 h-1z" fill="#8c8c8c"/><path d="M2,25 h2 v-2 h-1 v1 h-1z" fill="#8c8c8c"/><path d="M5,26.5 h2 v-2 h-1 v1 h-1z" fill="#8c8c8c"/><path d="M2,28 h2 v-2 h-1 v1 h-1z" fill="#8c8c8c"/><path d="M5,29.5 h2 v-2 h-1 v1 h-1z" fill="#8c8c8c"/><path d="M2,31 h2 v-2 h-1 v1 h-1z" fill="#8c8c8c"/><path d="M5,32.5 h2 v-2 h-1 v1 h-1z" fill="#8c8c8c"/><path d="M2,34 h2 v-2 h-1 v1 h-1z" fill="#8c8c8c"/><path d="M5,35.5 h2 v-2 h-1 v1 h-1z" fill="#8c8c8c"/><path d="M2,37 h2 v-2 h-1 v1 h-1z" fill="#8c8c8c"/><path d="M5,38.5 h2 v-2 h-1 v1 h-1z" fill="#8c8c8c"/><path d="M2,40 h2 v-2 h-1 v1 h-1z" fill="#8c8c8c"/><path d="M5,41.5 h2 v-2 h-1 v1 h-1z" fill="#8c8c8c"/><path d="M2,43 h2 v-2 h-1 v1 h-1z" fill="#8c8c8c"/><path d="M5,44.5 h2 v-2 h-1 v1 h-1z" fill="#8c8c8c"/><path d="M2,46 h2 v-2 h-1 v1 h-1z" fill="#8c8c8c"/><path d="M5,47.5 h2 v-2 h-1 v1 h-1z" fill="#8c8c8c"/><path d="M2,49 h2 v-2 h-1 v1 h-1z" fill="#8c8c8c"/><path d="M5,50.5 h2 v-2 h-1 v1 h-1z" fill="#8c8c8c"/><path d="M2,52 h2 v-2 h-1 v1 h-1z" fill="#8c8c8c"/><path d="M5,53.5 h2 v-2 h-1 v1 h-1z" fill="#8c8c8c"/><path d="M2,55 h2 v-2 h-1 v1 h-1z" fill="#8c8c8c"/><path d="M5,56.5 h2 v-2 h-1 v1 h-1z" fill="#8c8c8c"/><path d="M2,58 h2 v-2 h-1 v1 h-1z" fill="#8c8c8c"/><path d="M5,59.5 h2 v-2 h-1 v1 h-1z" fill="#8c8c8c"/><path d="M2,61 h2 v-2 h-1 v1 h-1z" fill="#8c8c8c"/><path d="M5,62.5 h2 v-2 h-1 v1 h-1z" fill="#8c8c8c"/><path d="M2,64 h2 v-2 h-1 v1 h-1z" fill="#8c8c8c"/><path d="M5,65.5 h2 v-2 h-1 v1 h-1z" fill="#8c8c8c"/><path d="M2,67 h2 v-2 h-1 v1 h-1z" fill="#8c8c8c"/><path d="M5,68.5 h2 v-2 h-1 v1 h-1z" fill="#8c8c8c"/><path d="M2,70 h2 v-2 h-1 v1 h-1z" fill="#8c8c8c"/></svg>
<div class="a" style="left:697px;top:452px;width:1px;height:73px;background:#000"></div>
<div class="a" style="left:689px;top:524px;width:9px;height:1px;background:#000"></div>
</body></html>
